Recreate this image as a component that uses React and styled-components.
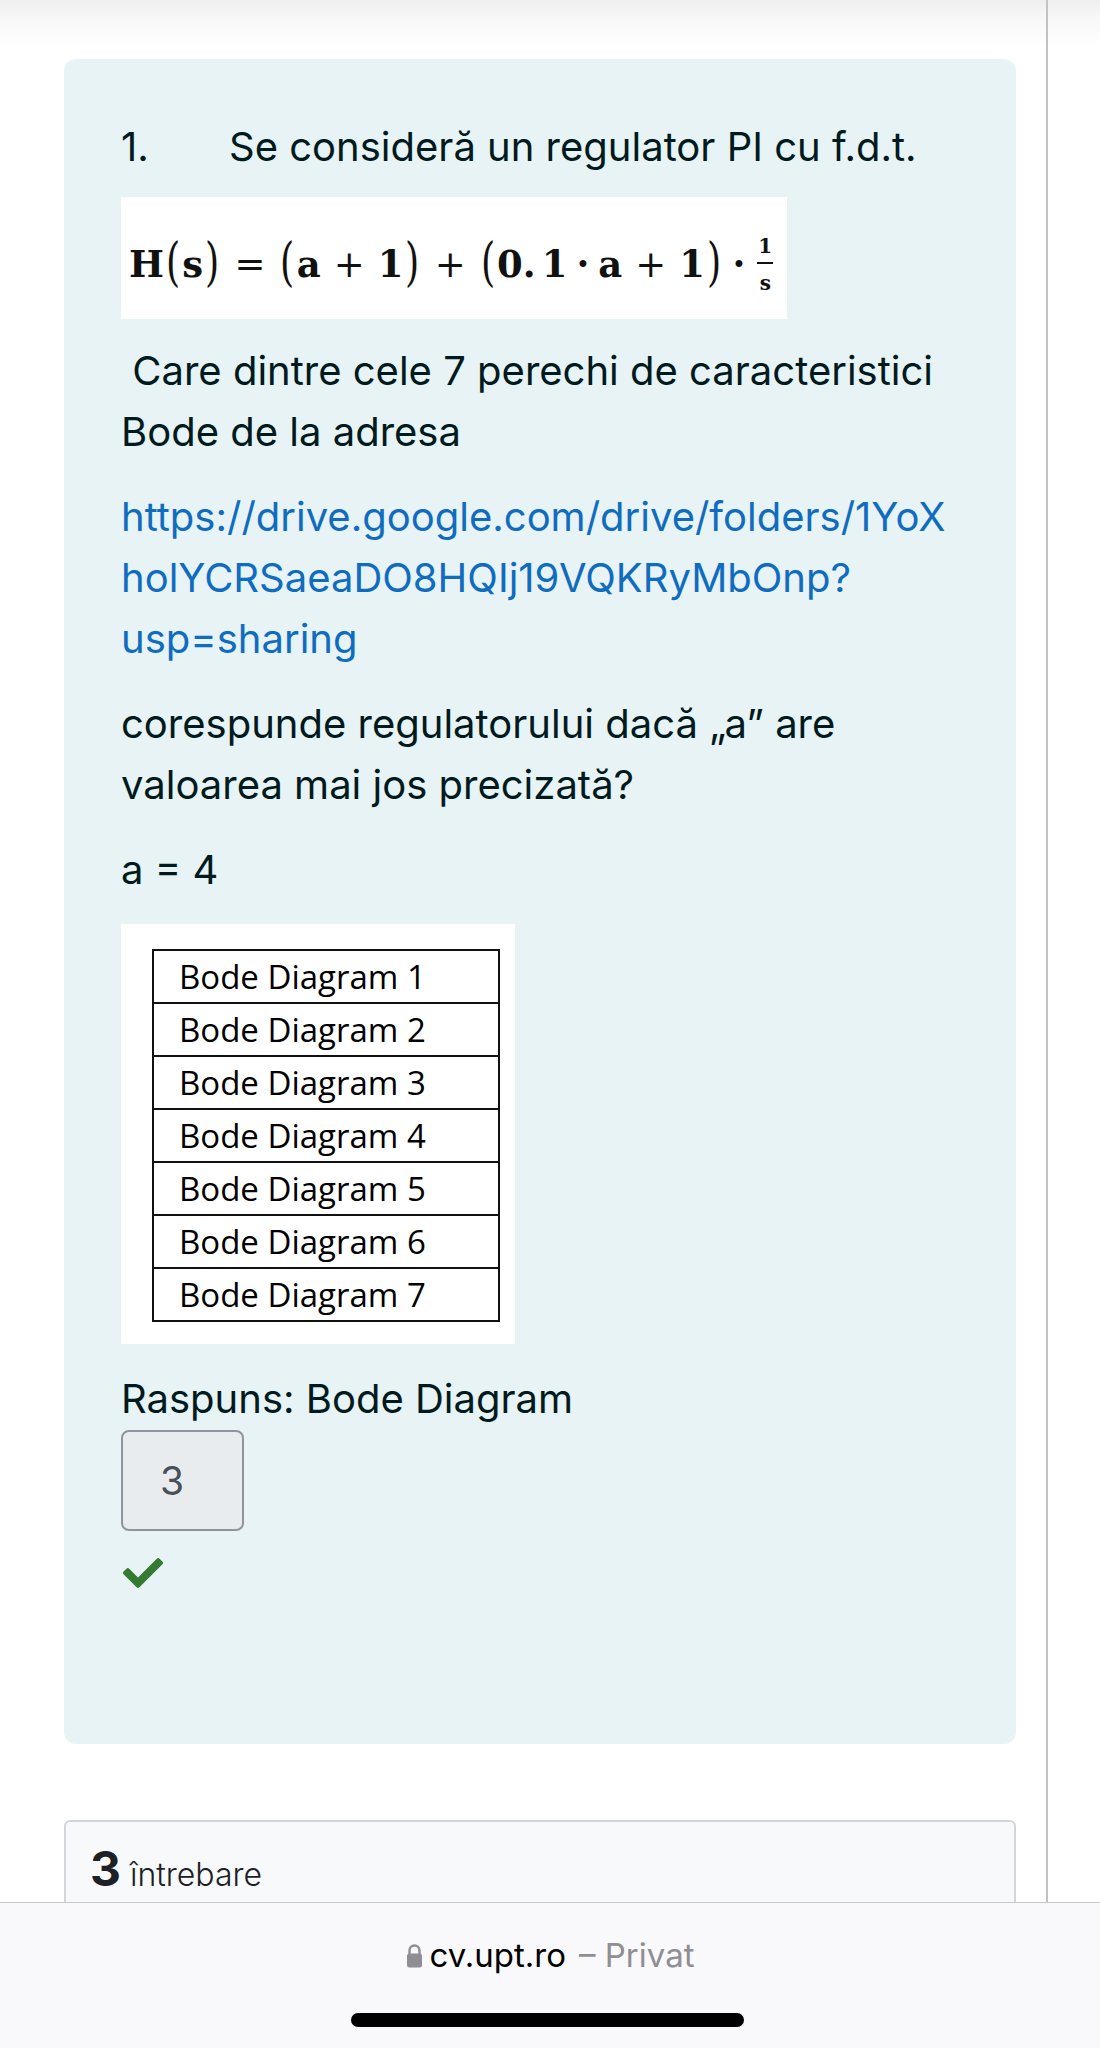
import React from "react";
import styled, { createGlobalStyle } from "styled-components";
import { FaCheck } from "react-icons/fa";

const GlobalStyle = createGlobalStyle`
    * { box-sizing: border-box; }
    body {
        margin: 0;
        background: #fff;
        font-family: Inter, "Noto Sans", sans-serif;
    }
`;

const diagrams = [1, 2, 3, 4, 5, 6, 7];

function App() {
    return (
        <Page>
            <GlobalStyle />
            <Main>
                <Column>
                    <Formulation>
                        <Para>
                            <Num>1.</Num>Se consideră un regulator PI cu f.d.t.
                        </Para>

                        <MathBox>
                            <Sym>H</Sym><Paren>(</Paren><Sym>s</Sym><Paren>)</Paren>
                            <Op>=</Op>
                            <Paren>(</Paren><Sym>a</Sym><Op>+</Op><Sym>1</Sym><Paren>)</Paren>
                            <Op>+</Op>
                            <Paren>(</Paren><Sym>0.</Sym><Sym $gap>1</Sym><Dot>·</Dot><Sym>a</Sym><Op>+</Op><Sym>1</Sym><Paren>)</Paren>
                            <Dot>·</Dot>
                            <Frac>
                                <span>1</span>
                                <span>s</span>
                            </Frac>
                        </MathBox>

                        <Para>
                            {"\u00a0"}Care dintre cele 7 perechi de caracteristici<br />
                            Bode de la adresa
                        </Para>

                        <Para>
                            <Link href="#">
                                https://drive.google.com/drive/folders/1YoX<br />
                                holYCRSaeaDO8HQIj19VQKRyMbOnp?<br />
                                usp=sharing
                            </Link>
                        </Para>

                        <Para>
                            corespunde regulatorului dacă „a” are<br />
                            valoarea mai jos precizată?
                        </Para>

                        <Para>a = 4</Para>

                        <TableBox>
                            <DiagramTable>
                                <tbody>
                                    {diagrams.map((n) => (
                                        <tr key={n}>
                                            <td>Bode Diagram {n}</td>
                                        </tr>
                                    ))}
                                </tbody>
                            </DiagramTable>
                        </TableBox>

                        <Answer>Raspuns: Bode Diagram</Answer>
                        <AnswerInput>3</AnswerInput>
                        <Correct>
                            <FaCheck />
                        </Correct>
                    </Formulation>

                    <InfoCard>
                        <QNo>3</QNo>
                        <QLabel>întrebare</QLabel>
                    </InfoCard>
                </Column>
                <Gutter />
            </Main>

            <Footer>
                <Address>
                    <svg width="17" height="25" viewBox="0 0 17 25">
                        <path d="M3.5 11V7.5a5 5 0 0 1 10 0V11" fill="none" stroke="#8e8e93" strokeWidth="2.4" />
                        <rect x="1" y="10.5" width="15" height="14" rx="2.5" fill="#8e8e93" />
                    </svg>
                    <Host>cv.upt.ro</Host>
                    <Private>– Privat</Private>
                </Address>
                <HomeBar />
            </Footer>
        </Page>
    );
}

export default App;

const Page = styled.div`
    width: 1100px;
    height: 2048px;
    display: flex;
    flex-direction: column;
    overflow: hidden;
`;

const Main = styled.div`
    flex: 1;
    min-height: 0;
    display: flex;
    overflow: hidden;
    background: linear-gradient(#eeeeee 0, #f8f8f8 20px, #ffffff 48px);
`;

const Column = styled.div`
    width: 1048px;
    flex-shrink: 0;
    border-right: 2px solid #c2c2c2;
    padding: 59px 30px 0 64px;
    display: flex;
    flex-direction: column;
    gap: 76px;
`;

const Gutter = styled.div`
    flex: 1;
`;

const Formulation = styled.div`
    background-color: #e7f3f5;
    color: #001a1e;
    border-radius: 12px;
    padding: 57px 40px 154px 57px;
    font-size: 40px;
    line-height: 61px;
`;

const Para = styled.p`
    margin: 0 0 24px;
`;

const Num = styled.span`
    display: inline-block;
    width: 108px;
`;

const MathBox = styled.div`
    width: 666px;
    height: 122px;
    margin: -4px 0 21px;
    background: #fff;
    display: flex;
    align-items: center;
    padding: 12px 0 0 8px;
    font-family: "DejaVu Serif", "Liberation Serif", serif;
    font-size: 37px;
    line-height: 1;
    color: #111;
`;

const Sym = styled.span`
    font-weight: bold;
    margin-left: ${(props) => (props.$gap ? "6px" : "0")};
`;

const Paren = styled.span`
    font-size: 52px;
    font-weight: normal;
    transform: scaleX(0.7);
    margin: 0 -1px 4px;
`;

const Op = styled.span`
    margin: 0 13px;
    font-weight: normal;
`;

const Dot = styled.span`
    margin: 0 9px;
    font-weight: bold;
`;

const Frac = styled.span`
    display: inline-flex;
    flex-direction: column;
    align-items: center;
    font-size: 20px;
    font-weight: bold;
    margin-left: 3px;
    span:first-child {
        border-bottom: 2px solid #111;
        padding: 0 1px 6px;
    }
    span:last-child {
        padding-top: 9px;
    }
`;

const Link = styled.a`
    color: #0f6cbf;
    text-decoration: none;
`;

const TableBox = styled.div`
    width: 394px;
    height: 420px;
    background: #fff;
    padding: 25px 0 0 31px;
    margin-bottom: 24px;
`;

const DiagramTable = styled.table`
    width: 348px;
    border-collapse: collapse;
    border: 2px solid #111;
    font-family: "Open Sans", "Noto Sans", sans-serif;
    font-size: 33px;
    color: #000;
    td {
        height: 53px;
        padding: 0 0 0 25px;
        border-bottom: 2px solid #111;
        line-height: 1;
    }
`;

const Answer = styled.div`
    margin-bottom: 1px;
`;

const AnswerInput = styled.div`
    width: 123px;
    height: 101px;
    border: 2px solid #8f959e;
    border-radius: 8px;
    background: #e9ecef;
    color: #495057;
    padding-left: 37px;
    display: flex;
    align-items: center;
    font-size: 39px;
`;

const Correct = styled.div`
    margin-top: 25px;
    height: 34px;
    color: #357a32;
    font-size: 40px;
    padding-left: 2px;
    display: flex;
    align-items: center;
`;

const InfoCard = styled.div`
    background: #f8f9fa;
    border: 2px solid #d2d6da;
    border-radius: 6px;
    height: 180px;
    padding: 17px 24px;
    display: flex;
    align-items: baseline;
    gap: 9px;
    color: #1d2125;
    flex-shrink: 0;
`;

const QNo = styled.span`
    font-size: 48px;
    font-weight: 700;
`;

const QLabel = styled.span`
    font-size: 32px;
    font-weight: 300;
`;

const Footer = styled.div`
    height: 146px;
    flex-shrink: 0;
    border-top: 1px solid #c8c8c8;
    background: #f9f9fb;
    display: flex;
    flex-direction: column;
    align-items: center;
    padding-top: 34px;
`;

const Address = styled.div`
    display: flex;
    align-items: center;
    gap: 7px;
    height: 36px;
    font-size: 33px;
`;

const Host = styled.span`
    color: #000;
`;

const Private = styled.span`
    color: #8e8e93;
    margin-left: 6px;
`;

const HomeBar = styled.div`
    margin-top: 40px;
    width: 393px;
    height: 14px;
    border-radius: 7px;
    background: #000;
    margin-right: 6px;
`;
